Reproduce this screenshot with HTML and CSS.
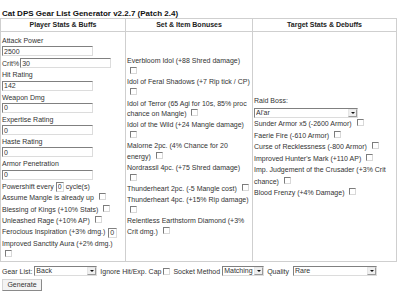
FILE: index.html
```html
<!DOCTYPE html>
<html lang="en">
<head>
    <meta charset="UTF-8">
    <title>Cat DPS Gear List Generator</title>
    <link rel="stylesheet" href="styles.css">
</head>
<body>

    <h1 class="title">Cat DPS Gear List Generator v2.2.7 (Patch 2.4)</h1>

    <table class="gear">
        <colgroup>
            <col class="col-player">
            <col class="col-items">
            <col class="col-target">
        </colgroup>
        <tr>
            <th>Player Stats &amp; Buffs</th>
            <th>Set &amp; Item Bonuses</th>
            <th>Target Stats &amp; Debuffs</th>
        </tr>
        <tr>
            <!-- Player stats -->
            <td class="player">
                <div class="field-label">Attack Power</div>
                <input class="stat" type="text" value="2500">
                <div class="field-row">Crit% <input class="stat stat-inline" type="text" value="30"></div>
                <div class="field-label">Hit Rating</div>
                <input class="stat" type="text" value="142">
                <div class="field-label">Weapon Dmg</div>
                <input class="stat" type="text" value="0">
                <div class="field-label">Expertise Rating</div>
                <input class="stat" type="text" value="0">
                <div class="field-label">Haste Rating</div>
                <input class="stat" type="text" value="0">
                <div class="field-label">Armor Penetration</div>
                <input class="stat" type="text" value="0">
                <div class="buffs">
                    Powershift every <input class="tiny" type="text" value="0"> cycle(s)<br>
                    Assume Mangle is already up <input class="check" type="checkbox"><br>
                    Blessing of Kings (+10% Stats) <input class="check" type="checkbox"><br>
                    Unleashed Rage (+10% AP) <input class="check" type="checkbox"><br>
                    Ferocious Inspiration (+3% dmg.) <input class="tiny tiny-wide" type="text" value="0"><br>
                    Improved Sanctity Aura (+2% dmg.) <input class="check" type="checkbox">
                </div>
            </td>

            <!-- Set and item bonuses -->
            <td class="items">
                Everbloom Idol (+88 Shred damage) <input class="check" type="checkbox"><br>
                Idol of Feral Shadows (+7 Rip tick / CP) <input class="check" type="checkbox"><br>
                Idol of Terror (65 Agi for 10s, 85% proc chance on Mangle) <input class="check" type="checkbox"><br>
                Idol of the Wild (+24 Mangle damage) <input class="check" type="checkbox"><br>
                Malorne 2pc. (4% Chance for 20 energy) <input class="check" type="checkbox"><br>
                Nordrassil 4pc. (+75 Shred damage) <input class="check" type="checkbox"><br>
                Thunderheart 2pc. (-5 Mangle cost) <input class="check" type="checkbox"><br>
                Thunderheart 4pc. (+15% Rip damage) <input class="check" type="checkbox"><br>
                Relentless Earthstorm Diamond (+3% Crit dmg.) <input class="check" type="checkbox">
            </td>

            <!-- Target -->
            <td class="target">
                Raid Boss:<br>
                <span class="pick pick-boss">
                    <select>
                        <option>Al'ar</option>
                    </select>
                </span><br>
                Sunder Armor x5 (-2600 Armor) <input class="check" type="checkbox"><br>
                Faerie Fire (-610 Armor) <input class="check" type="checkbox"><br>
                Curse of Recklessness (-800 Armor) <input class="check" type="checkbox"><br>
                Improved Hunter's Mark (+110 AP) <input class="check" type="checkbox"><br>
                Imp. Judgement of the Crusader (+3% Crit chance) <input class="check" type="checkbox"><br>
                Blood Frenzy (+4% Damage) <input class="check" type="checkbox">
            </td>
        </tr>
    </table>

    <div class="options">
        <span>Gear List:</span>
        <span class="pick pick-gear">
            <select>
                <option>Back</option>
            </select>
        </span>
        <span class="opt-gap">Ignore Hit/Exp. Cap</span>
        <input class="check" type="checkbox">
        <span class="opt-gap">Socket Method</span>
        <span class="pick pick-socket">
            <select>
                <option>Matching</option>
            </select>
        </span>
        <span class="opt-gap">Quality</span>
        <span class="pick pick-quality">
            <select>
                <option>Rare</option>
            </select>
        </span>
    </div>

    <div class="actions">
        <button class="generate" type="button">Generate</button>
    </div>

</body>
</html>
```

FILE: styles.css
```css
body {
    margin: 0;
    font-family: 'Liberation Sans', Arial, sans-serif;
    font-size: 7px;
    color: #333;
    background: #fff;
    overflow: hidden;
}

.title {
    margin: 0;
    padding: 9px 0 0 2px;
    font-size: 8px;
    line-height: 9px;
    font-weight: bold;
    color: #111;
}

/* main table */
.gear {
    border-collapse: collapse;
    table-layout: fixed;
    width: 396px;
}

.col-player { width: 125px; }
.col-items { width: 127px; }
.col-target { width: 144px; }

.gear th,
.gear td {
    border: 1px solid #cfcfcf;
    padding: 0;
}

.gear th {
    height: 12px;
    line-height: 12px;
    font-weight: bold;
    text-align: center;
    color: #222;
}

.gear td {
    vertical-align: middle;
}

.player {
    padding: 3px 2px 0 1px !important;
}

.items {
    padding: 1px 1px 0 1px !important;
    line-height: 10.7px;
}

.target {
    padding: 1px 1px 0 1px !important;
    line-height: 11.5px;
}

.field-label {
    line-height: 11.3px;
}

.field-row {
    height: 12px;
    display: flex;
    align-items: center;
    gap: 1px;
}

.buffs {
    line-height: 11.4px;
}

/* inputs, old windows look */
.stat,
.tiny,
.pick select {
    box-sizing: border-box;
    border: 1px solid;
    border-color: #808080 #dcdcdc #dcdcdc #808080;
    background: #fff;
    font-family: 'Liberation Sans', Arial, sans-serif;
    font-size: 7px;
    color: #333;
    padding: 0 1px;
    margin: 0;
    outline: none;
}

.stat {
    display: block;
    width: 91px;
    height: 10px;
    margin-bottom: 1px;
}

.stat-inline {
    display: inline-block;
    margin: 0;
}

.tiny {
    width: 8px;
    height: 10px;
    vertical-align: middle;
}

.tiny-wide {
    width: 9px;
    margin-left: 1px;
}

.check {
    appearance: none;
    width: 7px;
    height: 7px;
    margin: 0 1px 0 3px;
    border: 1px solid;
    border-color: #7c7c7c #d8d8d8 #d8d8d8 #7c7c7c;
    background: #fff;
    vertical-align: baseline;
}

/* selects with the little arrow button */
.pick {
    position: relative;
    display: inline-block;
    height: 10px;
    vertical-align: middle;
}

.pick select {
    appearance: none;
    display: block;
    width: 100%;
    height: 100%;
    line-height: 8px;
    border-radius: 0;
}

.pick::after {
    content: "";
    position: absolute;
    right: 1px;
    top: 1px;
    width: 7px;
    height: 6px;
    background: #efefef;
    border: 1px solid;
    border-color: #e6e6e6 #9a9a9a #9a9a9a #e6e6e6;
    pointer-events: none;
}

.pick::before {
    content: "";
    position: absolute;
    right: 3px;
    top: 4px;
    border-left: 2px solid transparent;
    border-right: 2px solid transparent;
    border-top: 2px solid #111;
    z-index: 1;
    pointer-events: none;
}

.pick-boss { width: 104px; }
.pick-gear { width: 63px; margin-left: 2px; }
.pick-socket { width: 42px; margin-left: 2px; }
.pick-quality { width: 84px; margin-left: 4px; }

/* bottom row */
.options {
    display: flex;
    align-items: center;
    height: 11px;
    padding: 4px 0 0 2px;
}

.options .check {
    margin: 0 0 0 2px;
}

.opt-gap {
    margin-left: 3px;
}

.actions {
    padding: 2px 0 0 2px;
}

.generate {
    height: 12px;
    width: 40px;
    padding: 0;
    font-family: 'Liberation Sans', Arial, sans-serif;
    font-size: 7px;
    color: #333;
    background: #f3f3f3;
    border: 1px solid;
    border-color: #d6d6d6 #8a8a8a #8a8a8a #d6d6d6;
    border-radius: 0;
}
```
